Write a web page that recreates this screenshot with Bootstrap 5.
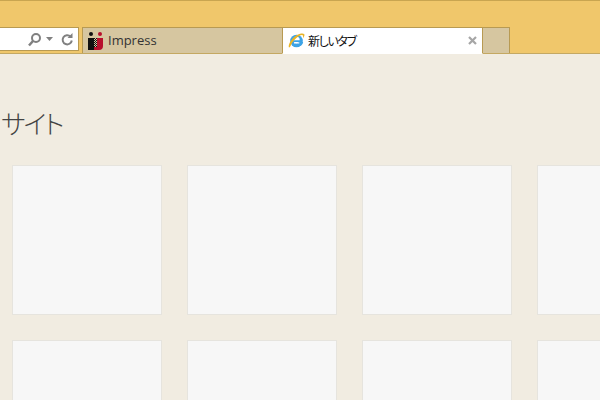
<!DOCTYPE html>
<html lang="ja">
<head>
    <meta charset="UTF-8">
    <title>新しいタブ</title>
    <link href="https://cdn.jsdelivr.net/npm/bootstrap@5.3.0/dist/css/bootstrap.min.css" rel="stylesheet">
    <style>
        html, body { height: 100%; }
        body {
            width: 600px;
            height: 400px;
            overflow: hidden;
            background: #f1ece1;
            font-family: "Noto Sans CJK JP", "Liberation Sans", sans-serif;
        }
        .ie-chrome {
            height: 54px;
            background: #f0c76b;
            border-top: 1px solid #c9a550;
            border-bottom: 1px solid #c4a862;
            padding-top: 26px;
        }
        .addr-box {
            width: 79px;
            height: 24px;
            margin-right: 3px;
            background: #fff;
            border: 1px solid #b89a52;
            border-left: 0;
            padding-right: 5px;
        }
        .ie-tab {
            height: 26px;
            border: 1px solid #b89a52;
            border-bottom: 0;
            background: #d6c6a0;
            font-size: 13px;
            color: #333;
        }
        .tab-site {
            width: 201px;
            padding-left: 5px;
            gap: 4px;
            font-family: "Open Sans", "Liberation Sans", sans-serif;
        }
        .tab-new {
            width: 201px;
            padding: 0 5px;
            margin-left: -1px;
            gap: 3px;
            background: #fff;
            color: #111;
            font-size: 12px;
            font-feature-settings: "palt";
            letter-spacing: -1.4px;
            border-bottom: 1px solid #fff;
            height: 27px;
            position: relative;
        }
        .tab-add { width: 28px; margin-left: -1px; }
        .tab-close {
            margin-left: auto;
            line-height: 0;
        }
        .sites-title {
            margin: 51px 0 24px 1px;
            font-size: 26px;
            font-weight: 300;
            line-height: 36px;
            color: #444;
            font-feature-settings: "palt";
            letter-spacing: -2px;
        }
        .tile-grid {
            display: grid;
            grid-template-columns: repeat(4, 150px);
            gap: 25px;
            padding-left: 12px;
        }
        .tile-box {
            height: 150px;
            background: #f7f7f7;
            border: 1px solid #e6e4de;
        }
    </style>
</head>
<body>
    <header class="ie-chrome d-flex align-items-start">
        <div class="addr-box d-flex align-items-center justify-content-end gap-1">
            <svg width="15" height="15" viewBox="0 0 15 15" fill="none" stroke="#808080" stroke-width="2"><circle cx="9" cy="6" r="4"/><path d="M6 9 2 13.500" stroke-width="2.500"/></svg>
            <svg width="7" height="4" viewBox="0 0 7 4" fill="#808080"><path d="M0 0h7L3.500 4z"/></svg>
            <svg class="ms-1" width="12" height="13" viewBox="0 0 12 13" fill="none" stroke="#808080" stroke-width="2"><path d="M9.500 3.500A4.600 4.600 0 1 0 10.800 7.500"/><path d="M11.500 0v5h-5z" fill="#808080" stroke="none"/></svg>
        </div>
        <div class="ie-tab tab-site d-flex align-items-center">
            <svg width="16" height="18" viewBox="0 0 16 18"><circle cx="3" cy="2" r="2" fill="#111"/><circle cx="12" cy="2" r="2" fill="#b8102c"/><path d="M0 6h6v12H0z" fill="#111"/><path d="M9 6h6v8a4 4 0 0 1-4 4H6v-3h3z" fill="#b8102c"/><path d="M6 6h3v9H6z" fill="#d6c6a0"/><path d="M6 6h1v1H6zM8 6h1v1H8zM7 7h1v1H7zM6 8h1v1H6zM8 8h1v1H8zM7 9h1v1H7zM6 10h1v1H6zM8 10h1v1H8zM7 11h1v1H7zM6 12h1v1H6zM8 12h1v1H8zM7 13h1v1H7zM6 14h1v1H6zM8 14h1v1H8z" fill="#111"/></svg>
            <span>Impress</span>
        </div>
        <div class="ie-tab tab-new d-flex align-items-center">
            <svg width="17" height="17" viewBox="0 0 17 17"><circle cx="8.500" cy="9" r="6.300" fill="#3da3e6"/><circle cx="8.500" cy="8" r="3.200" fill="#fff"/><path d="M4.500 8.200h9v1.800h-9zM10 10h5.200a6.300 6.300 0 0 1-2 3.500H9z" fill="#3da3e6"/><path d="M6 10.300h5.300v1.200H6z" fill="#fff"/><path d="M1 15.500C-.5 13 4 5.500 9.500 2.800c3-1.500 6-1.800 6.800-.5.500 1-.3 2.700-1.300 3.900.2-1.600.2-2.800-.6-3.200C12.500 2 5.500 7.500 3.300 12.300c-.7 1.700-1.300 3.200-2.300 3.200z" fill="#e8b428"/></svg>
            <span>新しいタブ</span>
            <svg class="tab-close" width="9" height="9" viewBox="0 0 9 9" stroke="#a6a6a6" stroke-width="2.200"><path d="M1 1l7 7M8 1 1 8"/></svg>
        </div>
        <div class="ie-tab tab-add"></div>
    </header>
    <main>
        <h1 class="sites-title">サイト</h1>
        <div class="tile-grid">
            <div class="tile-box"></div>
            <div class="tile-box"></div>
            <div class="tile-box"></div>
            <div class="tile-box"></div>
            <div class="tile-box"></div>
            <div class="tile-box"></div>
            <div class="tile-box"></div>
            <div class="tile-box"></div>
        </div>
    </main>
    <script src="https://cdn.jsdelivr.net/npm/bootstrap@5.3.0/dist/js/bootstrap.bundle.min.js"></script>
</body>
</html>
